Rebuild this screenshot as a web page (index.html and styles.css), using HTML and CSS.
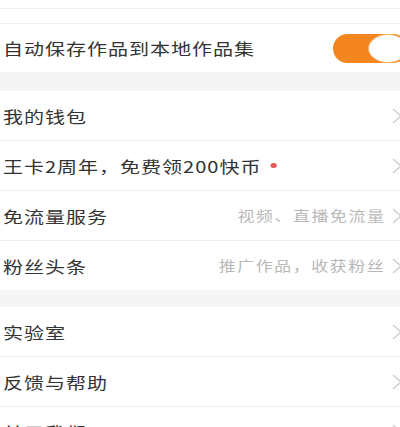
FILE: index.html
```html
<!DOCTYPE html>
<html lang="zh-CN">
<head>
<meta charset="utf-8">
<link rel="stylesheet" href="styles.css">
</head>
<body>
<div class="page">
  <div class="strip strip-a"></div>
  <div class="strip strip-b"></div>
  <div class="row row-toggle">
    <span class="label">自动保存作品到本地作品集</span>
    <div class="toggle"><div class="knob"></div></div>
  </div>
  <div class="gap gap-1"></div>
  <div class="group">
    <div class="row">
      <span class="label">我的钱包</span>
      <svg class="chev" viewBox="0 0 10 16" width="10" height="16"><path d="M1 1 L9 8 L1 15" /></svg>
    </div>
    <div class="row">
      <span class="label">王卡2周年，免费领200快币<span class="dot"></span></span>
      <svg class="chev" viewBox="0 0 10 16" width="10" height="16"><path d="M1 1 L9 8 L1 15" /></svg>
    </div>
    <div class="row">
      <span class="label">免流量服务</span>
      <span class="sub">视频、直播免流量</span>
      <svg class="chev" viewBox="0 0 10 16" width="10" height="16"><path d="M1 1 L9 8 L1 15" /></svg>
    </div>
    <div class="row last">
      <span class="label">粉丝头条</span>
      <span class="sub">推广作品，收获粉丝</span>
      <svg class="chev" viewBox="0 0 10 16" width="10" height="16"><path d="M1 1 L9 8 L1 15" /></svg>
    </div>
  </div>
  <div class="gap gap-2"></div>
  <div class="group">
    <div class="row">
      <span class="label">实验室</span>
      <svg class="chev" viewBox="0 0 10 16" width="10" height="16"><path d="M1 1 L9 8 L1 15" /></svg>
    </div>
    <div class="row">
      <span class="label">反馈与帮助</span>
      <svg class="chev" viewBox="0 0 10 16" width="10" height="16"><path d="M1 1 L9 8 L1 15" /></svg>
    </div>
    <div class="row">
      <span class="label">关于我们</span>
      <svg class="chev" viewBox="0 0 10 16" width="10" height="16"><path d="M1 1 L9 8 L1 15" /></svg>
    </div>
  </div>
</div>
</body>
</html>
```
FILE: styles.css
```css
html, body {
  margin: 0;
  padding: 0;
  background: #ffffff;
}
body {
  width: 400px;
  height: 427px;
  overflow: hidden;
  font-family: "Noto Sans CJK SC", "Noto Sans", sans-serif;
}
.page {
  width: 400px;
  overflow: hidden;
}
.strip {
  background: #ffffff;
  border-bottom: 1px solid #f0f0f0;
}
.strip-a { height: 8px; }
.strip-b { height: 14px; }
.gap {
  background: #f5f5f5;
}
.gap-1 { height: 19px; }
.gap-2 { height: 17px; }
.row {
  display: flex;
  align-items: center;
  height: 49px;
  border-bottom: 1px solid #eeeeee;
  padding-left: 3px;
  background: #ffffff;
  box-sizing: content-box;
}
.row.last { border-bottom: none; }
.row-toggle {
  height: 48px;
  border-bottom: none;
}
.label {
  font-size: 16px;
  letter-spacing: 0.8px;
  color: #333333;
  white-space: nowrap;
  line-height: 1;
  display: inline-flex;
  align-items: center;
  transform: scaleX(1.25);
  transform-origin: left center;
}
.sub {
  margin-left: auto;
  margin-right: 7px;
  font-size: 13.5px;
  letter-spacing: 1.3px;
  color: #b8b8b8;
  white-space: nowrap;
  line-height: 1;
  transform: scaleX(1.25);
  transform-origin: right center;
}
.dot {
  width: 5px;
  height: 5px;
  border-radius: 50%;
  background: #e45757;
  margin-left: 7px;
}
.chev {
  margin-left: auto;
  margin-right: -2px;
  flex: none;
  overflow: visible;
}
.sub + .chev { margin-left: 0; }
.chev path {
  fill: none;
  stroke: #cccccc;
  stroke-width: 1.4;
}
.toggle {
  margin-left: auto;
  margin-right: -8px;
  width: 73px;
  height: 29px;
  border-radius: 15px;
  background: #f4861f;
  display: flex;
  align-items: center;
  padding: 0 1px;
  flex: none;
}
.knob {
  margin-left: auto;
  width: 38px;
  height: 27px;
  border-radius: 50%;
  background: #ffffff;
  box-shadow: 0 0 0 1px #f7b46e;
}
```
